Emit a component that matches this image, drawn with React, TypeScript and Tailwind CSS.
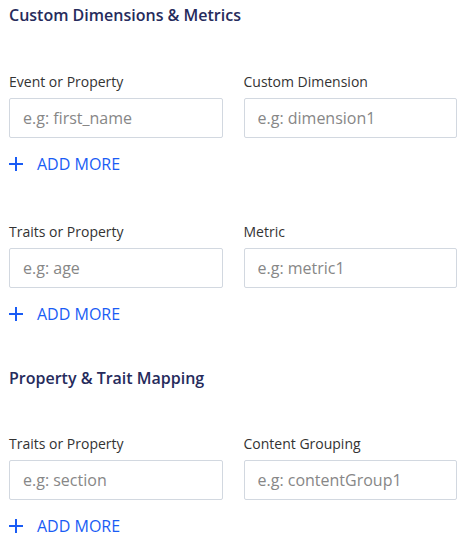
import React from "react";

const Field = ({ label, placeholder }: { label: string; placeholder: string }) => (
  <div className="flex flex-col w-[214px]">
    <label className="text-[14px] leading-[20px] text-[#333333]">{label}</label>
    <input
      className="mt-[6px] h-[40px] w-full border border-[#d2d8e0] rounded-[2px] px-[13px] text-[16px] text-[#333] placeholder:text-[#878787] outline-none bg-white"
      placeholder={placeholder}
    />
  </div>
);

const AddMore = () => (
  <button className="flex items-center mt-[16px] h-[20px] text-[#1a5cf5]">
    <svg width="14" height="14" viewBox="0 0 14 14" className="mr-[14px]">
      <path d="M7 0V14M0 7H14" stroke="#1a5cf5" strokeWidth="2" />
    </svg>
    <span className="text-[16px] leading-[20px] font-medium">ADD MORE</span>
  </button>
);

const Group = ({ a, b }: { a: [string, string]; b: [string, string] }) => (
  <div className="flex flex-col">
    <div className="flex gap-[21px]">
      <Field label={a[0]} placeholder={a[1]} />
      <Field label={b[0]} placeholder={b[1]} />
    </div>
    <AddMore />
  </div>
);

export default function App() {
  return (
    <div
      className="w-[466px] h-[541px] bg-white px-[9px] pt-[4px]"
      style={{ fontFamily: '"Open Sans", "Noto Sans", sans-serif' }}
    >
      <h2 className="text-[16px] leading-[22px] font-semibold text-[#262b5c]">Custom Dimensions &amp; Metrics</h2>
      <div className="mt-[46px]">
        <Group a={["Event or Property", "e.g: first_name"]} b={["Custom Dimension", "e.g: dimension1"]} />
      </div>
      <div className="mt-[48px]">
        <Group a={["Traits or Property", "e.g: age"]} b={["Metric", "e.g: metric1"]} />
      </div>
      <h2 className="mt-[43px] text-[16px] leading-[22px] font-semibold text-[#262b5c]">Property &amp; Trait Mapping</h2>
      <div className="mt-[45px]">
        <Group a={["Traits or Property", "e.g: section"]} b={["Content Grouping", "e.g: contentGroup1"]} />
      </div>
    </div>
  );
}
